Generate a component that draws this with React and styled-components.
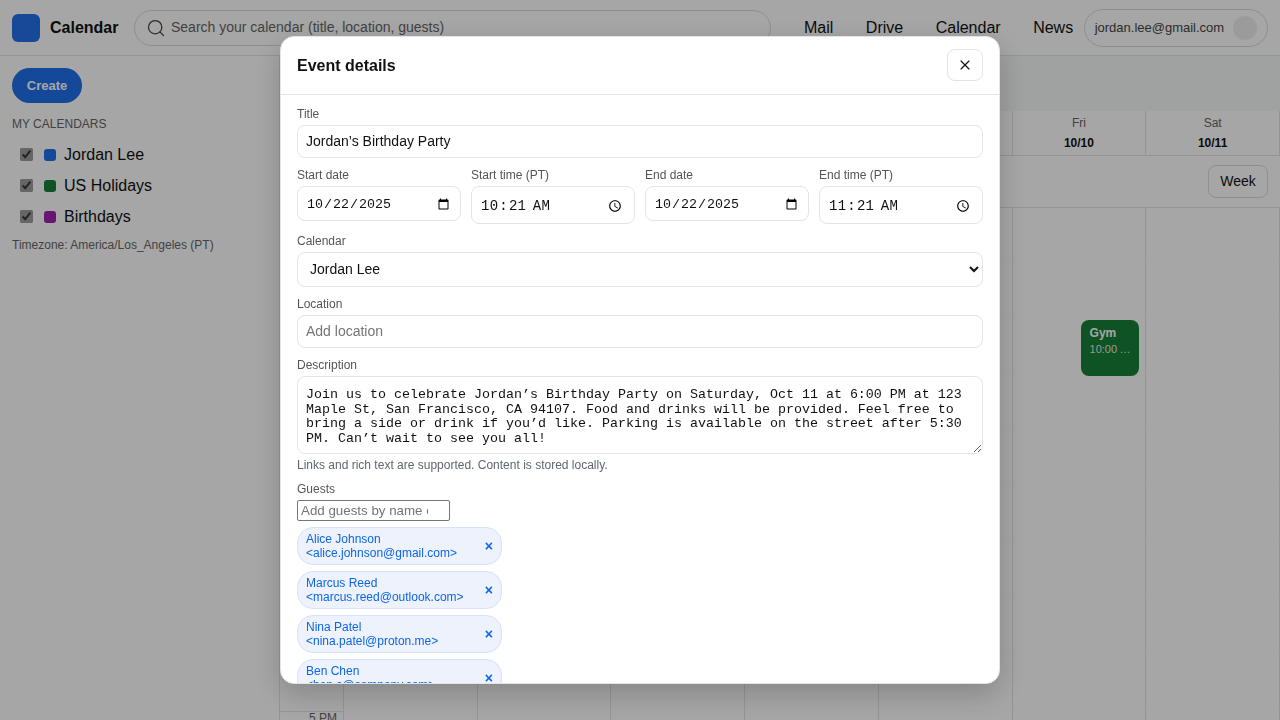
import React from "react";
import styled, { createGlobalStyle } from "styled-components";
import { Search, X } from "lucide-react";

const GlobalStyle = createGlobalStyle`
  html, body {
    margin: 0;
    height: 100%;
    background: #fff;
    overflow: hidden;
    font-family: "Liberation Sans", Arial, sans-serif;
    color: #111;
  }
  * { box-sizing: border-box; }
`;

const Page = styled.div`
  width: 1280px;
  height: 720px;
  display: flex;
  flex-direction: column;
  overflow: hidden;
`;

const Header = styled.header`
  flex: none;
  height: 56px;
  display: flex;
  align-items: center;
  padding: 0 12px;
  border-bottom: 1px solid #e4e4e4;
`;

const Logo = styled.div`
  width: 28px;
  height: 28px;
  border-radius: 6px;
  background: #2272ec;
  margin-right: 10px;
`;

const Brand = styled.div`
  width: 84px;
  font-size: 16px;
  font-weight: 700;
`;

const SearchBar = styled.div`
  width: 637px;
  height: 36px;
  display: flex;
  align-items: center;
  gap: 5px;
  padding: 0 11px 0 11px;
  border: 1px solid #dcdcdc;
  border-radius: 18px;
  font-size: 14px;
  color: #666;

  span {
    margin-bottom: 2px;
  }
`;

const Nav = styled.nav`
  display: flex;
  margin-left: 33px;
  gap: 32.5px;
  font-size: 16px;
`;

const UserPill = styled.div`
  margin-left: 10.5px;
  width: 184px;
  height: 38px;
  display: flex;
  align-items: center;
  justify-content: space-between;
  padding: 0 10px;
  border: 1px solid #dcdcdc;
  border-radius: 19px;
  font-size: 13px;
  color: #444;
`;

const Avatar = styled.div`
  width: 24px;
  height: 24px;
  border-radius: 50%;
  background: #efefef;
`;

const Content = styled.div`
  flex: 1;
  display: flex;
  min-height: 0;
`;

const Sidebar = styled.aside`
  flex: none;
  width: 280px;
  padding: 12px;
  border-right: 1px solid #e4e4e4;
`;

const CreateButton = styled.button`
  display: block;
  width: 70px;
  height: 35px;
  padding: 0;
  border: none;
  border-radius: 18px;
  background: #1f6feb;
  color: #fff;
  font: 700 13px "Liberation Sans", Arial, sans-serif;
`;

const SectionTitle = styled.div`
  margin-top: 14px;
  font-size: 12px;
  line-height: 14px;
  color: #666;
`;

const CalendarList = styled.div`
  margin-top: 8px;
  display: flex;
  flex-direction: column;
`;

const CalendarRow = styled.label`
  height: 31px;
  display: flex;
  align-items: center;
  padding-left: 8px;
  font-size: 16px;
`;

const CalendarCheck = styled.input`
  width: 13px;
  height: 13px;
  margin: 0 11px 0 0;
  accent-color: #9d9d9d;
`;

const Dot = styled.span`
  width: 12px;
  height: 12px;
  border-radius: 3px;
  margin-right: 8px;
  background: ${(p) => p.$color};
`;

const Timezone = styled.div`
  margin-top: 6px;
  font-size: 12px;
  line-height: 14px;
  color: #666;
`;

const Main = styled.main`
  flex: 1;
  min-width: 0;
  display: flex;
  flex-direction: column;
  overflow: hidden;
`;

const MonthBar = styled.div`
  flex: none;
  height: 55px;
  background: #f6f9f7;
`;

const DayHeadRow = styled.div`
  flex: none;
  height: 45px;
  display: grid;
  grid-template-columns: 64px repeat(7, 1fr);
  border-bottom: 1px solid #e4e4e4;
`;

const DayHead = styled.div`
  display: flex;
  flex-direction: column;
  align-items: center;
  justify-content: center;
  gap: 6px;
  border-right: 1px solid #e4e4e4;
  font-size: 12px;
  line-height: 14px;
  color: #666;

  b {
    color: #111;
  }
`;

const ViewBar = styled.div`
  flex: none;
  height: 52px;
  display: flex;
  align-items: flex-start;
  justify-content: flex-end;
  padding: 9px 12px 0;
  border-bottom: 1px solid #e4e4e4;
`;

const ViewButton = styled.button`
  width: 60px;
  height: 33px;
  padding: 0 0 2px;
  border: 1px solid #dcdcdc;
  border-radius: 8px;
  background: #fff;
  color: #111;
  font: 14px "Liberation Sans", Arial, sans-serif;
`;

const TimeGrid = styled.div`
  flex: none;
  display: grid;
  grid-template-columns: 64px repeat(7, 1fr);
`;

const TimeLabel = styled.div`
  height: 56px;
  padding: 0 6px;
  border-bottom: 1px solid #e4e4e4;
  border-right: 1px solid #e4e4e4;
  text-align: right;
  font-size: 12px;
  line-height: 12px;
  color: #666;
  display: flex;
  align-items: flex-start;
  justify-content: flex-end;
`;

const DayColumn = styled.div`
  position: relative;
  border-right: 1px solid #e4e4e4;
`;

const Slot = styled.div`
  height: 56px;
  border-bottom: 1px solid #fcfcfc;
`;

const Event = styled.div`
  position: absolute;
  top: 112px;
  left: 68px;
  right: 6px;
  height: 56px;
  padding: 6px 7px 6px 9px;
  border-radius: 8px;
  background: #188038;
  color: #fff;
  font-size: 12px;
  line-height: 14px;
  overflow: hidden;

  b {
    display: block;
    margin-bottom: 2px;
  }
`;

const EventTime = styled.div`
  font-size: 11px;
  white-space: nowrap;
  overflow: hidden;
  text-overflow: ellipsis;
  opacity: 0.85;
`;

const Overlay = styled.div`
  position: fixed;
  inset: 0;
  display: flex;
  align-items: center;
  justify-content: center;
  background: rgba(0, 0, 0, 0.35);
`;

const Modal = styled.div`
  width: 720px;
  height: 648px;
  display: flex;
  flex-direction: column;
  background: #fff;
  border-radius: 14px;
  box-shadow: 0 10px 30px rgba(0, 0, 0, 0.2);
  border: 1px solid #e4e4e4;
  overflow: hidden;
`;

const ModalHead = styled.div`
  flex: none;
  height: 58px;
  display: flex;
  align-items: center;
  justify-content: space-between;
  padding: 0 16px;
  border-bottom: 1px solid #e4e4e4;
`;

const ModalTitle = styled.div`
  font-size: 16px;
  font-weight: 700;
`;

const CloseButton = styled.button`
  width: 36px;
  height: 32px;
  margin-top: -2px;
  display: flex;
  align-items: center;
  justify-content: center;
  padding: 0;
  border: 1px solid #e4e4e4;
  border-radius: 8px;
  background: #fff;
  color: #111;
`;

const ModalBody = styled.div`
  flex: 1;
  min-height: 0;
  padding: 12px 16px 0;
  display: flex;
  flex-direction: column;
  gap: 10px;
  overflow: hidden;
`;

const Field = styled.div`
  flex: none;
  display: flex;
  flex-direction: column;
  gap: 4px;
  min-width: 0;
`;

const FieldLabel = styled.label`
  font-size: 12px;
  line-height: 14px;
  color: #555;
`;

const DateRow = styled.div`
  flex: none;
  display: grid;
  grid-template-columns: repeat(4, 1fr);
  gap: 10px;
  align-items: start;
`;

const TextInput = styled.input`
  width: 100%;
  height: 33px;
  padding: 7px 8px 9px;
  border: 1px solid #e4e4e4;
  border-radius: 8px;
  color: #111;
  font: 14px "Liberation Sans", Arial, sans-serif;

  &::placeholder {
    color: #757575;
  }
`;

const DateField = styled.input`
  width: 100%;
  height: 35px;
  padding: 9px 8px 7px;
  border: 1px solid #e4e4e4;
  border-radius: 8px;
  background: #fff;
  color: #111;
  font: 13.33px "Liberation Mono", monospace;
`;

const TimeField = styled(DateField)`
  height: 38px;
  font-size: 14px;
  letter-spacing: 0.25px;
`;

const SelectInput = styled.select`
  width: 100%;
  height: 35px;
  padding: 0 8px 2px;
  border: 1px solid #e4e4e4;
  border-radius: 8px;
  background: #fff;
  color: #111;
  font: 14px "Liberation Sans", Arial, sans-serif;
`;

const TextArea = styled.textarea`
  display: block;
  width: 100%;
  height: 78px;
  padding: 11px 8px 5px;
  border: 1px solid #e4e4e4;
  border-radius: 8px;
  color: #111;
  font: 13.33px/14.7px "Liberation Mono", monospace;
`;

const Hint = styled.div`
  font-size: 12px;
  line-height: 14px;
  color: #5f6672;
`;

const GuestInput = styled.input`
  width: 153px;
  height: 21px;
  padding: 1px 21px 1px 3px;
  border: 1px solid #767676;
  border-radius: 2px;
  font: 13.33px "Liberation Sans", Arial, sans-serif;
`;

const ChipList = styled.div`
  margin-top: 2px;
  display: flex;
  flex-direction: column;
  align-items: flex-start;
  gap: 6px;
`;

const Chip = styled.div`
  flex: none;
  width: 205px;
  height: 38px;
  display: flex;
  align-items: center;
  justify-content: space-between;
  padding: 0 8px;
  border: 1px solid #d6e2fb;
  border-radius: 16px;
  background: #edf2fd;
  color: #0d66e8;
  font-size: 12px;
  line-height: 14px;
`;

const ChipRemove = styled.span`
  font-size: 14px;
  font-weight: 700;
`;

const DAYS = [
  ["Sun", "10/5"],
  ["Mon", "10/6"],
  ["Tue", "10/7"],
  ["Wed", "10/8"],
  ["Thu", "10/9"],
  ["Fri", "10/10"],
  ["Sat", "10/11"],
];

const HOURS = ["8 AM", "9 AM", "10 AM", "11 AM", "12 PM", "1 PM", "2 PM", "3 PM", "4 PM", "5 PM"];

const CALENDARS = [
  ["Jordan Lee", "#1f6feb"],
  ["US Holidays", "#188038"],
  ["Birthdays", "#a020b0"],
];

const GUESTS = [
  ["Alice Johnson", "alice.johnson@gmail.com"],
  ["Marcus Reed", "marcus.reed@outlook.com"],
  ["Nina Patel", "nina.patel@proton.me"],
  ["Ben Chen", "ben.c@company.com"],
];

const DESCRIPTION =
  "Join us to celebrate Jordan’s Birthday Party on Saturday, Oct 11 at 6:00 PM at 123 Maple St, San Francisco, CA 94107. Food and drinks will be provided. Feel free to bring a side or drink if you’d like. Parking is available on the street after 5:30 PM. Can’t wait to see you all!";

export default function App() {
  return (
    <Page>
      <GlobalStyle />
      <Header>
        <Logo />
        <Brand>Calendar</Brand>
        <SearchBar>
          <Search size={20} strokeWidth={1.5} color="#444" />
          <span>Search your calendar (title, location, guests)</span>
        </SearchBar>
        <Nav>
          <span>Mail</span>
          <span>Drive</span>
          <span>Calendar</span>
          <span>News</span>
        </Nav>
        <UserPill>
          jordan.lee@gmail.com
          <Avatar />
        </UserPill>
      </Header>
      <Content>
        <Sidebar>
          <CreateButton>Create</CreateButton>
          <SectionTitle>MY CALENDARS</SectionTitle>
          <CalendarList>
            {CALENDARS.map(([name, color]) => (
              <CalendarRow key={name}>
                <CalendarCheck type="checkbox" defaultChecked />
                <Dot $color={color} />
                {name}
              </CalendarRow>
            ))}
          </CalendarList>
          <Timezone>Timezone: America/Los_Angeles (PT)</Timezone>
        </Sidebar>
        <Main>
          <MonthBar />
          <DayHeadRow>
            <DayHead />
            {DAYS.map(([day, date]) => (
              <DayHead key={day}>
                {day}
                <b>{date}</b>
              </DayHead>
            ))}
          </DayHeadRow>
          <ViewBar>
            <ViewButton>Week</ViewButton>
          </ViewBar>
          <TimeGrid>
            <div>
              {HOURS.map((hour) => (
                <TimeLabel key={hour}>{hour}</TimeLabel>
              ))}
            </div>
            {DAYS.map(([day]) => (
              <DayColumn key={day}>
                {HOURS.map((hour) => (
                  <Slot key={hour} />
                ))}
                {day === "Fri" && (
                  <Event>
                    <b>Gym</b>
                    <EventTime>10:00 AM – 11:00 AM</EventTime>
                  </Event>
                )}
              </DayColumn>
            ))}
          </TimeGrid>
        </Main>
      </Content>
      <Overlay>
        <Modal>
          <ModalHead>
            <ModalTitle>Event details</ModalTitle>
            <CloseButton aria-label="Close">
              <X size={16} strokeWidth={1.75} />
            </CloseButton>
          </ModalHead>
          <ModalBody>
            <Field>
              <FieldLabel>Title</FieldLabel>
              <TextInput defaultValue="Jordan’s Birthday Party" />
            </Field>
            <DateRow>
              <Field>
                <FieldLabel>Start date</FieldLabel>
                <DateField type="date" defaultValue="2025-10-22" />
              </Field>
              <Field>
                <FieldLabel>Start time (PT)</FieldLabel>
                <TimeField type="time" defaultValue="10:21" />
              </Field>
              <Field>
                <FieldLabel>End date</FieldLabel>
                <DateField type="date" defaultValue="2025-10-22" />
              </Field>
              <Field>
                <FieldLabel>End time (PT)</FieldLabel>
                <TimeField type="time" defaultValue="11:21" />
              </Field>
            </DateRow>
            <Field>
              <FieldLabel>Calendar</FieldLabel>
              <SelectInput defaultValue="Jordan Lee">
                {CALENDARS.map(([name]) => (
                  <option key={name}>{name}</option>
                ))}
              </SelectInput>
            </Field>
            <Field>
              <FieldLabel>Location</FieldLabel>
              <TextInput placeholder="Add location" />
            </Field>
            <Field>
              <FieldLabel>Description</FieldLabel>
              <TextArea defaultValue={DESCRIPTION} />
              <Hint>Links and rich text are supported. Content is stored locally.</Hint>
            </Field>
            <Field>
              <FieldLabel>Guests</FieldLabel>
              <GuestInput placeholder="Add guests by name or email" />
              <ChipList>
                {GUESTS.map(([name, email]) => (
                  <Chip key={email}>
                    <span>
                      {name}
                      <br />
                      {`<${email}>`}
                    </span>
                    <ChipRemove>×</ChipRemove>
                  </Chip>
                ))}
              </ChipList>
            </Field>
          </ModalBody>
        </Modal>
      </Overlay>
    </Page>
  );
}
